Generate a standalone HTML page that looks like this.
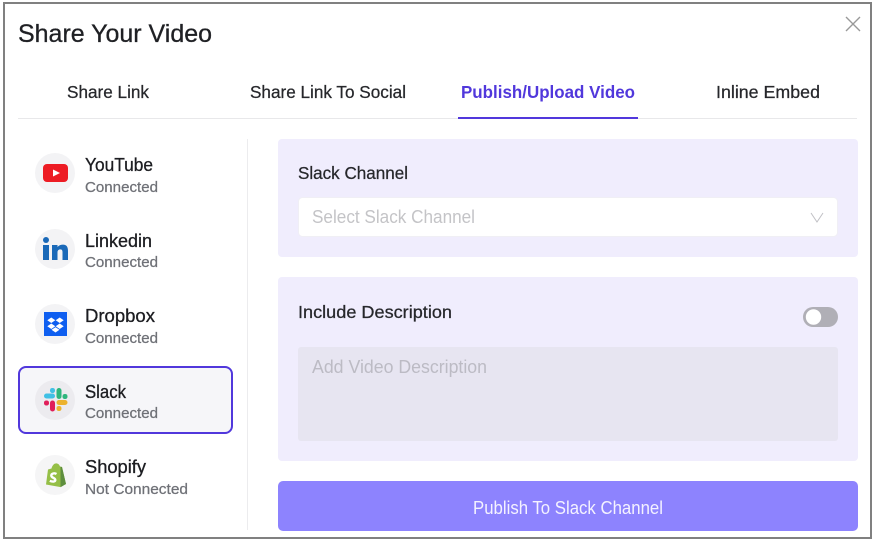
<!DOCTYPE html>
<html><head><meta charset="utf-8"><style>
html,body{margin:0;padding:0;background:#fff;width:873px;height:540px;overflow:hidden}
svg{display:block}
text{font-family:"Liberation Sans",sans-serif;fill:#1f2024}
.h{stroke:#1f2024;stroke-width:.3px}
.t{font-size:17.5px;fill:#26272b;stroke:#26272b;stroke-width:.25px}
.n{font-size:18px;fill:#1c1d21;stroke:#1c1d21;stroke-width:.3px}
.s{font-size:14.5px;fill:#6f7177;stroke:#6f7177;stroke-width:.25px}
</style></head><body>
<svg width="873" height="540" viewBox="0 0 873 540" xmlns="http://www.w3.org/2000/svg">
<rect x="4" y="3" width="867" height="535" fill="#fff" stroke="#808080" stroke-width="2"/>
<text class="h" x="18" y="42" font-size="25" textLength="194" lengthAdjust="spacingAndGlyphs">Share Your Video</text>
<path d="M846 17L860 31M860 17L846 31" stroke="#999" stroke-width="1.4" fill="none"/>
<rect x="18" y="118" width="839" height="1" fill="#e8e8ea"/>
<rect x="458" y="117" width="180" height="2" fill="#5138dc"/>
<text class="t" x="67" y="98" textLength="82" lengthAdjust="spacingAndGlyphs">Share Link</text>
<text class="t" x="250" y="98" textLength="156" lengthAdjust="spacingAndGlyphs">Share Link To Social</text>
<text x="461" y="98" font-size="17.5" textLength="174" lengthAdjust="spacingAndGlyphs" style="fill:#5138dc;font-weight:bold">Publish/Upload Video</text>
<text class="t" x="716" y="98" textLength="104" lengthAdjust="spacingAndGlyphs">Inline Embed</text>
<rect x="247" y="139" width="1" height="391" fill="#ececee"/>

<rect x="19" y="367" width="213" height="66" rx="7" fill="#f6f6f9" stroke="#5138dc" stroke-width="2"/>

<circle cx="55" cy="173" r="20" fill="#f3f3f5"/>
<rect x="43" y="164" width="25" height="18" rx="4" fill="#ed1c24"/>
<path d="M53 169.500L60 173L53 176.500Z" fill="#fff"/>

<circle cx="55" cy="249" r="20" fill="#f3f3f5"/>
<circle cx="46" cy="240" r="3" fill="#1a69b8"/>
<rect x="43" y="245" width="6" height="15" fill="#1a69b8"/>
<path d="M52 245H57.500V247C59 245.300 61 244.600 63 244.600C66.800 244.600 68 247.300 68 251V260H62.500V252C62.500 250.300 61.800 249.400 60.300 249.400C58.600 249.400 57.500 250.500 57.500 252.300V260H52Z" fill="#1a69b8"/>

<circle cx="55" cy="324" r="20" fill="#f3f3f5"/>
<rect x="44" y="312" width="23" height="24" fill="#0f5ff0"/>
<path d="M51.300 317.500L55.300 320.300L51.300 323L47.300 320.300ZM59.700 317.500L63.700 320.300L59.700 323L55.700 320.300ZM51.300 323.500L55.300 326.200L51.300 329L47.300 326.200ZM59.700 323.500L63.700 326.200L59.700 329L55.700 326.200ZM51.500 329.700L55.500 327.300L59.500 329.700L55.500 332.500Z" fill="#fff"/>

<circle cx="55" cy="400" r="20" fill="#ecebef"/>
<g fill="#40c0e5"><rect x="50" y="388" width="5" height="5" rx="2.200"/><rect x="44" y="393.500" width="11" height="5" rx="2.500"/></g>
<g fill="#2eb67d"><rect x="56.500" y="388" width="5" height="11" rx="2.500"/><rect x="62.500" y="394" width="5" height="5" rx="2.200"/></g>
<g fill="#e01e5a"><rect x="44" y="400.500" width="5" height="5" rx="2.200"/><rect x="50" y="400.500" width="5" height="11" rx="2.500"/></g>
<g fill="#ecb22e"><rect x="56.500" y="400" width="11" height="5" rx="2.500"/><rect x="56.500" y="406" width="5" height="5" rx="2.200"/></g>

<circle cx="55" cy="475" r="20" fill="#f5f5f6"/>
<path d="M46 484.500L48 469.500L51.500 468.500C52.500 464.500 55 463 57 463.500C58.500 463.800 59.500 465 60 466.500L62 467L66 484L60 487Z" fill="#95bf47"/>
<path d="M60.500 466.800L62 467L66 484L60.500 487.200Z" fill="#5e8e3e"/>
<path d="M56.500 474C54.500 472.800 51.300 473.300 51.300 475.600C51.300 477.900 55.300 477.800 55.300 480C55.300 481.800 52.500 482 49.800 480.800" stroke="#fff" stroke-width="2.400" fill="none"/>

<text class="n" x="85" y="171" textLength="68" lengthAdjust="spacingAndGlyphs">YouTube</text>
<text class="s" x="85" y="192" textLength="73" lengthAdjust="spacingAndGlyphs">Connected</text>
<text class="n" x="85" y="247" textLength="67" lengthAdjust="spacingAndGlyphs">Linkedin</text>
<text class="s" x="85" y="267" textLength="73" lengthAdjust="spacingAndGlyphs">Connected</text>
<text class="n" x="85" y="322" textLength="70" lengthAdjust="spacingAndGlyphs">Dropbox</text>
<text class="s" x="85" y="343" textLength="73" lengthAdjust="spacingAndGlyphs">Connected</text>
<text class="n" x="85" y="398" textLength="41" lengthAdjust="spacingAndGlyphs">Slack</text>
<text class="s" x="85" y="418" textLength="73" lengthAdjust="spacingAndGlyphs">Connected</text>
<text class="n" x="85" y="473" textLength="61" lengthAdjust="spacingAndGlyphs">Shopify</text>
<text class="s" x="85" y="494" textLength="103" lengthAdjust="spacingAndGlyphs">Not Connected</text>

<rect x="278" y="139" width="580" height="118" rx="4" fill="#f0edfd"/>
<text class="t" x="298" y="179" textLength="110" lengthAdjust="spacingAndGlyphs">Slack Channel</text>
<rect x="298.500" y="197.500" width="539" height="39" rx="4" fill="#fff" stroke="#f0eff5"/>
<text x="312" y="223" font-size="18" textLength="163" lengthAdjust="spacingAndGlyphs" style="fill:#c4c4c7">Select Slack Channel</text>
<path d="M811 213L817 222L823 213" stroke="#c0c0c4" stroke-width="1" fill="none"/>

<rect x="278" y="277" width="580" height="184" rx="4" fill="#f0edfd"/>
<text class="t" x="298" y="318" textLength="154" lengthAdjust="spacingAndGlyphs">Include Description</text>
<rect x="803" y="307" width="35" height="20" rx="10" fill="#b0afb6"/>
<circle cx="813.500" cy="317" r="7.700" fill="#fff"/>
<rect x="298" y="347" width="540" height="94" rx="3" fill="#e7e5f1"/>
<text x="312" y="373" font-size="18" textLength="175" lengthAdjust="spacingAndGlyphs" style="fill:#bcbbc4">Add Video Description</text>

<rect x="278" y="481" width="580" height="50" rx="5" fill="#8d83fe"/>
<text x="473" y="514" font-size="18" textLength="190" lengthAdjust="spacingAndGlyphs" style="fill:#f4f2ff">Publish To Slack Channel</text>
</svg>
</body></html>
